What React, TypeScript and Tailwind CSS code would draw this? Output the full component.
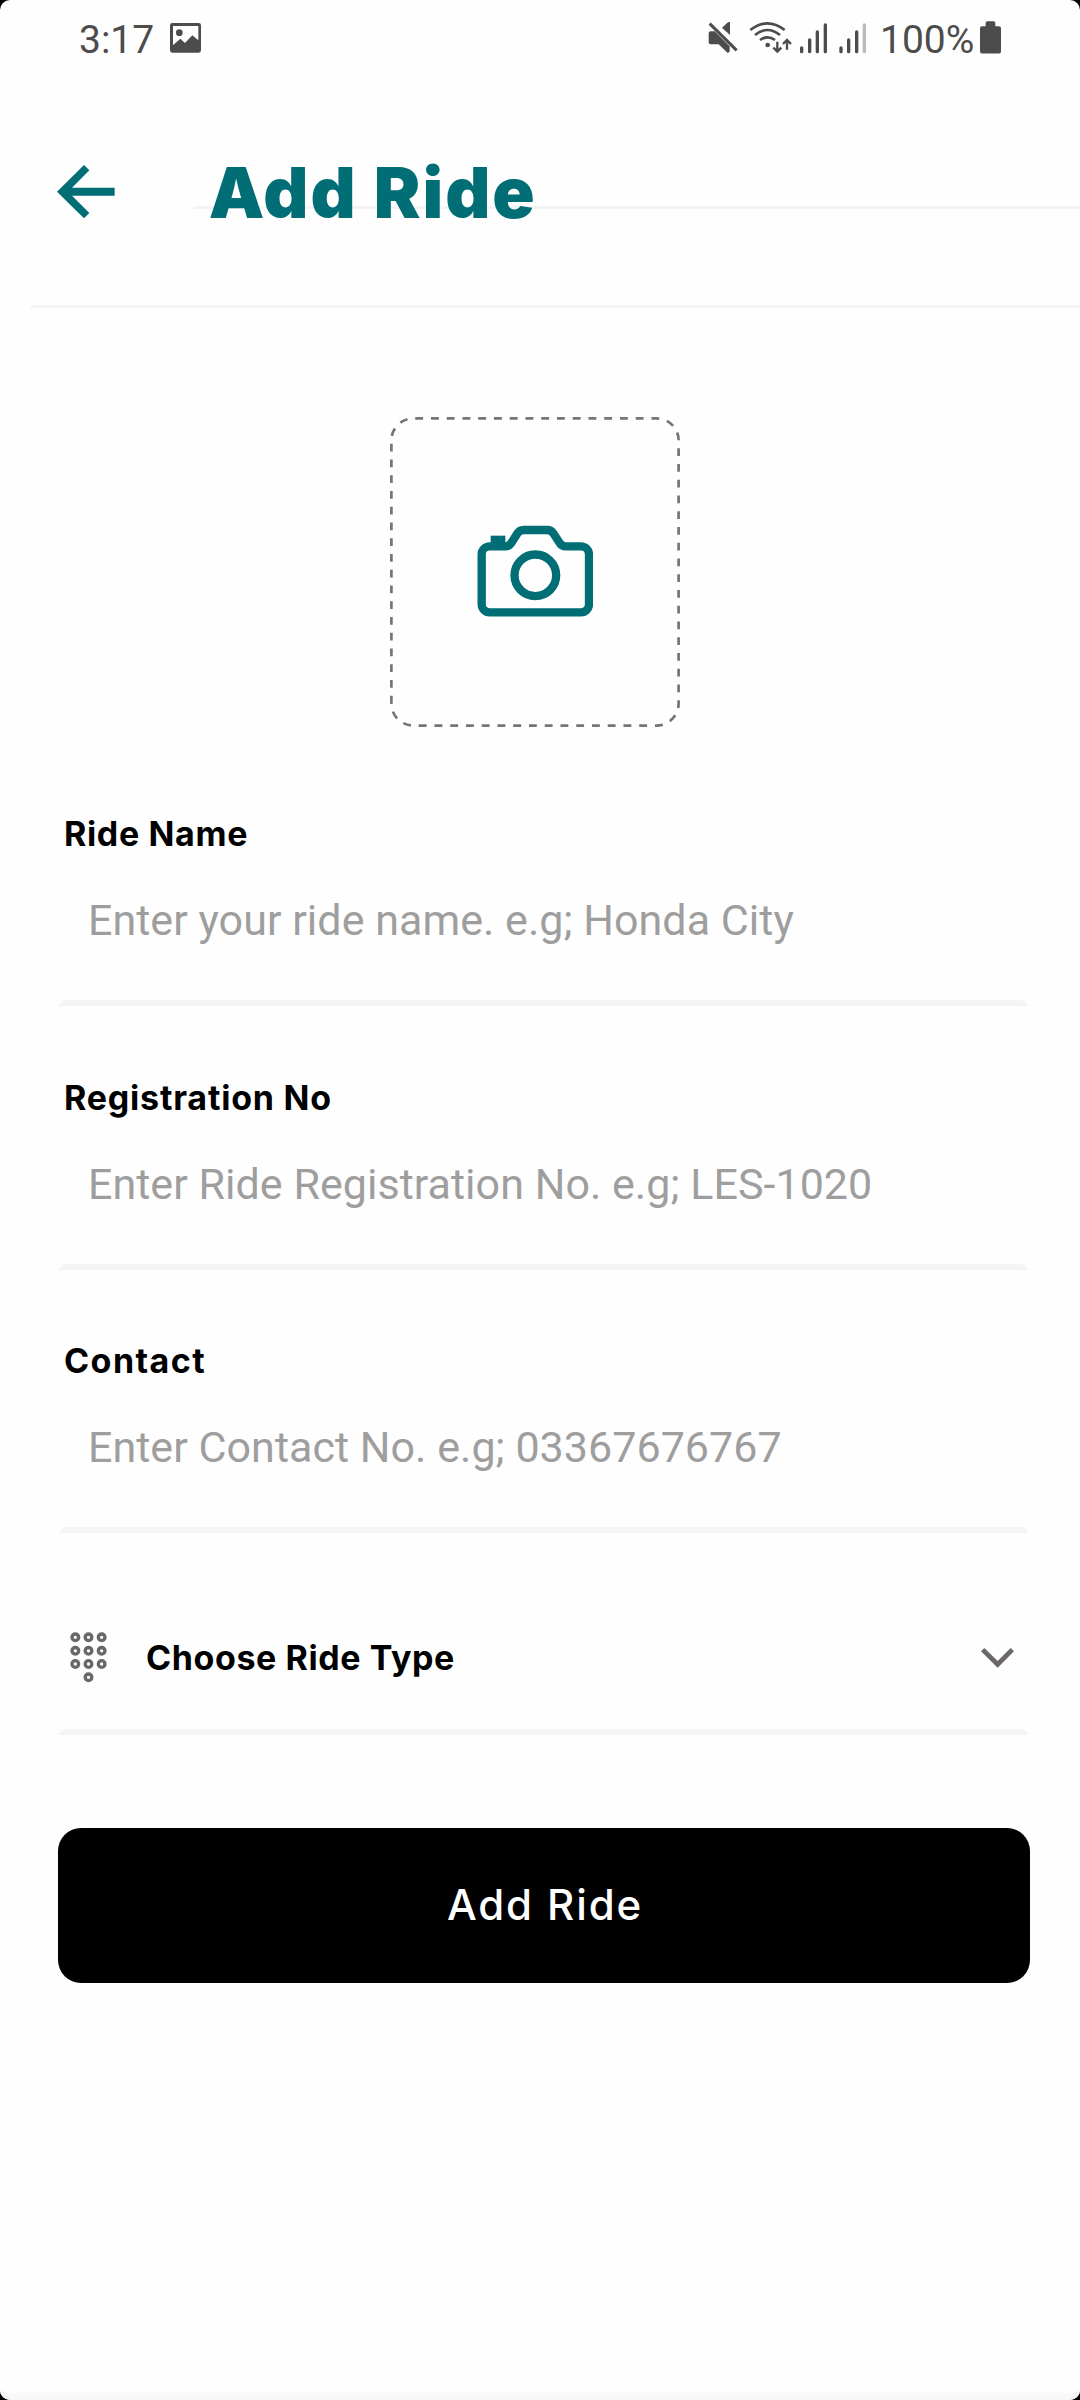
import React from "react";

const label = "font-['Inter'] text-[34px] leading-[40px] font-bold text-black";

function StatusBar() {
  return (
    <div className="flex h-[80px] items-start text-[#4c4c4c]">
      <span className="ml-[79px] mt-[17px] w-[91px] whitespace-nowrap text-[39px] leading-[47px]">3:17</span>
      <svg className="mt-[23px] h-[30px] w-[31px]" viewBox="510 70 93 90" fill="currentColor">
        <path fillRule="evenodd" d="M517 70H596Q603 70 603 77V152Q603 159 596 159H517Q510 159 510 152V77Q510 70 517 70ZM519 79V137L541 117L555 130L577 107L595 122V79Z" />
        <circle cx="538" cy="99" r="10" />
      </svg>
      <svg className="ml-[507px] mt-[21px] h-[34px] w-[160px]" viewBox="84 63 480 102" fill="none" stroke="currentColor">
        <g fill="currentColor" stroke="none">
          <path d="M92 94H104L149 139V155L143 159L116 133H92Q86 133 86 127V100Q86 94 92 94Z" />
          <path d="M150 66V105L126 83L144 67Z" />
          <circle cx="263" cy="135" r="7" />
        </g>
        <path d="M89 71L170 151" strokeWidth="9" />
        <path d="M211 90Q262 50 314 90M225 105Q262 75 300 105M240 120Q262 104 285 120" strokeWidth="8" />
        <path d="M292 125V153M280 143L292 155L304 143M321 149V121M309 132L321 120L333 132" strokeWidth="7" />
        <g strokeWidth="10" strokeLinecap="round">
          <path d="M365 144V155M389 120V155M412 96V155M436 75V155M483 144V155M506 120V155M530 96V155" />
          <path d="M553 75V155" stroke="#bababa" />
        </g>
      </svg>
      <span className="ml-[12px] mt-[17px] w-[100px] whitespace-nowrap text-[39px] leading-[47px]">100%</span>
      <svg className="mt-[21px] h-[33px] w-[21px]" viewBox="0 0 63 98" fill="currentColor">
        <path d="M17 15V5Q17 0 22 0H41Q46 0 46 5V15H57Q63 15 63 21V91Q63 97 57 97H6Q0 97 0 91V21Q0 15 6 15Z" />
      </svg>
    </div>
  );
}

function Header() {
  return (
    <header className="ml-[29px] flex h-[228px] items-start border-[3px] border-r-0 border-transparent border-b-[#f4f4f4]">
      <svg className="ml-[25px] mt-[82px] h-[53.3px] w-[57.7px]" viewBox="172 495 173 160" fill="#016e76">
        <path d="M172 575L253 495L269 511L217 563H345V587H217L269 639L253 655Z" />
      </svg>
      <div className="ml-[77px] h-[126px] flex-1 border-[3px] border-r-0 border-transparent border-b-[#f4f4f4]">
        <h1 className="ml-[14px] mt-[65px] whitespace-nowrap font-['Inter'] text-[70px] leading-[84px] font-black tracking-[2px] text-[#016e76]">
          Add Ride
        </h1>
      </div>
    </header>
  );
}

function PhotoPicker() {
  return (
    <div className="mt-[109px] ml-[390px] grid h-[310px] w-[290px]">
      <svg className="col-start-1 row-start-1 h-[310px] w-[290px]" viewBox="390 417 290 310" fill="none">
        <path
          d="M391.4 703.5V440.5A22 22 0 0 1 413.4 418.4H656.6A22 22 0 0 1 678.6 440.5V703.5A22 22 0 0 1 656.6 725.6H413.4A22 22 0 0 1 391.4 703.5"
          stroke="#757575"
          strokeWidth="2.7"
          strokeDasharray="7.875 7.875"
        />
      </svg>
      <svg className="col-start-1 row-start-1 mt-[108.3px] ml-[86.7px] h-[92px] w-[116.7px]" viewBox="320 376 350 276" fill="none" stroke="#016e76" strokeWidth="25">
        <path d="M358 440H405Q416 440 423 430L440 403Q447 391 460 391H531Q542 391 549 401L568 430Q575 440 586 440H632A24 24 0 0 1 656 464V614A24 24 0 0 1 632 638H358A24 24 0 0 1 334 614V464A24 24 0 0 1 358 440Z" />
        <circle cx="495" cy="527" r="62.5" />
        <path d="M361 408H405V440H361Z" fill="#016e76" stroke="none" />
      </svg>
    </div>
  );
}

function Field({ name, hint, tracking }: { name: string; hint: string; tracking: string }) {
  return (
    <div className="flex flex-col">
      <span className={`${label} ${tracking} ml-[6px] h-[40px] whitespace-nowrap`}>{name}</span>
      <div className="mt-[22px] h-[130px] border-[6px] border-transparent border-b-[#f4f4f4]">
        <span className="ml-[24px] block whitespace-nowrap pt-[13px] text-[43px] leading-[50px] tracking-[0.04px] text-[#9e9e9e]">{hint}</span>
      </div>
    </div>
  );
}

export default function App() {
  return (
    <div className="h-[2400px] w-[1080px] overflow-hidden bg-black font-['Roboto',sans-serif]">
      <main className="flex h-[2400px] flex-col rounded-[10px] bg-[#fefefe]">
        <StatusBar />
        <Header />
        <PhotoPicker />
        <form className="mt-[87px] ml-[58px] flex w-[972px] flex-col">
          <div className="flex w-[971px] flex-col">
            <Field name="Ride Name" hint="Enter your ride name. e.g; Honda City" tracking="tracking-[0.65px]" />
            <div className="h-[72px]" />
            <Field name="Registration No" hint="Enter Ride Registration No. e.g; LES-1020" tracking="tracking-[0.8px]" />
            <div className="h-[71px]" />
            <Field name="Contact" hint="Enter Contact No. e.g; 03367676767" tracking="tracking-[1.45px]" />
            <div className="mt-[53px] flex h-[149px] items-start border-[6px] border-transparent border-b-[#f4f4f4]">
              <svg className="ml-[6px] mt-[39.7px] h-[51px] w-[37px]" viewBox="91 95 111 153" fill="none" stroke="#6b6766" strokeWidth="10">
                {[111, 151.5, 191].map((y) =>
                  [107, 146.5, 186].map((x) => <circle key={`${x}-${y}`} cx={x} cy={y} r="10" />),
                )}
                <circle cx="146.5" cy="231" r="10" />
              </svg>
              <span className={`${label} ml-[39px] mt-[46px] flex-1 whitespace-nowrap tracking-[0.6px]`}>Choose Ride Type</span>
              <svg className="mt-[56px] mr-[9px] h-[20px] w-[33px]" viewBox="903 144 99 60" fill="#6b6766">
                <path d="M903 154L913 144L953 183L992 144L1002 154L953 203Z" />
              </svg>
            </div>
          </div>
          <button type="button" className="mt-[93px] h-[155px] w-[972px] rounded-[23px] bg-black pb-[2px] pl-[2px] font-['Inter'] text-[42px] font-medium tracking-[1.9px] text-white">
            Add Ride
          </button>
        </form>
        <div className="mt-auto h-[10px] rounded-b-[10px] bg-linear-to-b from-[#fefefe] to-[#f6f6f6]" />
      </main>
    </div>
  );
}
